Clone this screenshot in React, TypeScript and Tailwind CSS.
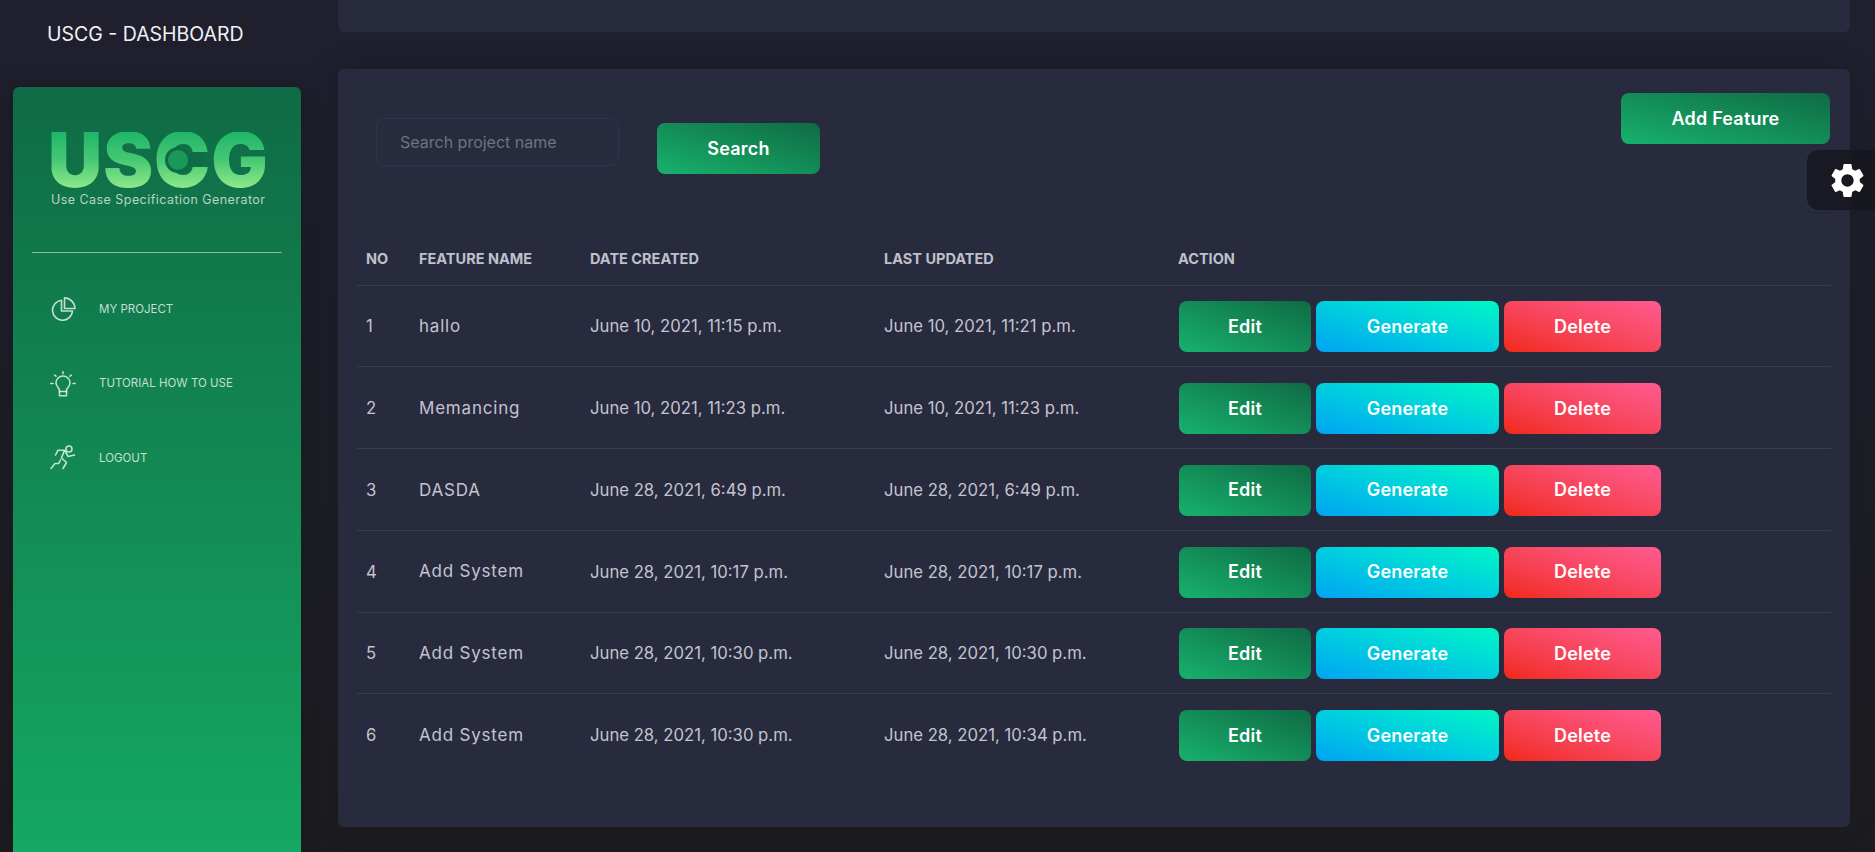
import { MdSettings } from "react-icons/md";

const rows = [
  { no: 1, name: "hallo", created: "June 10, 2021, 11:15 p.m.", updated: "June 10, 2021, 11:21 p.m." },
  { no: 2, name: "Memancing", created: "June 10, 2021, 11:23 p.m.", updated: "June 10, 2021, 11:23 p.m." },
  { no: 3, name: "DASDA", created: "June 28, 2021, 6:49 p.m.", updated: "June 28, 2021, 6:49 p.m." },
  { no: 4, name: "Add System", created: "June 28, 2021, 10:17 p.m.", updated: "June 28, 2021, 10:17 p.m." },
  { no: 5, name: "Add System", created: "June 28, 2021, 10:30 p.m.", updated: "June 28, 2021, 10:30 p.m." },
  { no: 6, name: "Add System", created: "June 28, 2021, 10:30 p.m.", updated: "June 28, 2021, 10:34 p.m." },
];

const green = "bg-linear-to-tr from-[#17b26c] to-[#0f6b45]";
const btn = "h-[51px] rounded-lg text-white text-[18px] tracking-[0.2px] font-semibold flex items-center justify-center pb-[1px]";

function PieIcon() {
  return (
    <svg width="26" height="24" viewBox="0 0 26 24" fill="none" stroke="currentColor" strokeWidth="1.6" strokeLinejoin="round">
      <path d="M11.500 3.300a10 10 0 1 0 11 10.700h-11z" />
      <path d="M14.500 .9v10.600h10.500A10.800 10.800 0 0 0 14.500 .9z" />
    </svg>
  );
}

function BulbIcon() {
  return (
    <svg width="26" height="26" viewBox="0 0 26 26" fill="none" stroke="currentColor" strokeWidth="1.6" strokeLinecap="round">
      <path d="M9.500 20.500v-1.500c0-1.800-3.500-3.500-3.500-7a7 7 0 0 1 14 0c0 3.500-3.500 5.200-3.500 7v1.500z" />
      <path d="M9.500 24.800h7M9.500 20.500v4.300M16.500 20.500v4.300" />
      <path d="M13 .8v1.800M4.500 4l1.500 1.200M21.500 4l-1.500 1.200M.8 12.500h2.200M23 12.500h2.200" />
    </svg>
  );
}

function RunnerIcon() {
  return (
    <svg width="26" height="26" viewBox="0 0 26 26" fill="none" stroke="currentColor" strokeWidth="1.6" strokeLinecap="round" strokeLinejoin="round">
      <circle cx="19" cy="4" r="3" />
      <path d="M5.500 10l2.500-4.800h6.500l-3 7.800 5 4.500-3.500 6" />
      <path d="M15 6l3 5.500 6.500-1.500" />
      <path d="M10.500 15l-1.800 3.500H5l-4 5" />
    </svg>
  );
}

function Logo() {
  return (
    <div className="relative w-[214px] h-[90px]">
      <div className="relative h-[56px]">
        <span className="block -ml-[3px] text-[75px] leading-[56px] font-black tracking-[1px] whitespace-nowrap bg-linear-to-b from-[#1db568] via-[#45c874] to-[#8ce98a] bg-clip-text text-transparent">
          USCG
        </span>
        <span className="absolute left-[127px] top-[21px] w-[25px] h-[13px] bg-[#0f6b45]" />
        <span className="absolute left-[114px] top-[15px] size-[26px] rounded-full bg-[#1a9858] border-[3px] border-[#0f6b45]" />
      </div>
      <p className="mt-[4px] text-[12.5px] leading-4 tracking-[0.45px] text-white/70 whitespace-nowrap">Use Case Specification Generator</p>
    </div>
  );
}

function Sidebar() {
  return (
    <div className="w-[338px] shrink-0 flex flex-col">
      <div className="h-[87px] pl-[47px] pt-[21px] text-[19.5px] leading-[26px] text-[#f1f1f5] whitespace-nowrap">USCG - DASHBOARD</div>
      <aside className="ml-[13px] w-[288px] h-[765px] rounded-t-md bg-linear-to-b from-[#0f6b45] to-[#15a862] shadow-[0_0_20px_rgba(0,0,0,0.2)]">
        <div className="pl-[38px] pt-[45px] h-[165px]">
          <Logo />
        </div>
        <div className="mx-[19px] h-px bg-white/50" />
        <nav className="mt-[19px] flex flex-col text-white/75">
          {[
            { label: "MY PROJECT", icon: <PieIcon /> },
            { label: "TUTORIAL HOW TO USE", icon: <BulbIcon /> },
            { label: "LOGOUT", icon: <RunnerIcon /> },
          ].map((item) => (
            <a key={item.label} className="h-[74.5px] pl-[37px] flex items-center">
              <span className="w-[49px] flex justify-start">{item.icon}</span>
              <span className="text-[11.5px]">{item.label}</span>
            </a>
          ))}
        </nav>
      </aside>
    </div>
  );
}

export default function App() {
  return (
    <div className="relative h-[852px] overflow-hidden flex bg-linear-to-b from-[#1f1f2e] to-[#1c1c20] font-['Inter','Liberation_Sans',sans-serif]">
      <Sidebar />
      <main className="w-[1512px] shrink-0 flex flex-col">
        <div className="h-[32px] rounded-b-md bg-[#282b3e]" />
        <section className="mt-[37px] h-[758px] rounded-md bg-[#282b3e] px-[19px] shadow-[0_0_30px_rgba(0,0,0,0.12)]">
          <div className="h-[144px] flex items-start justify-between border-b border-[#24263a]">
            <div className="pl-[19px] pt-[49px] flex items-start gap-[38px]">
              <div className="w-[243px] h-[48px] rounded-lg border border-[#2f3350] pl-[23px] flex items-center text-[16px] text-[#6f7284]">
                Search project name
              </div>
              <button className={`${btn} ${green} w-[163px] mt-[5px]`}>Search</button>
            </div>
            <button className={`${btn} ${green} w-[209px] mt-[24px] mr-[1px]`}>Add Feature</button>
          </div>
          <table className="w-full table-fixed border-collapse">
            <colgroup>
              <col className="w-[53px]" />
              <col className="w-[171px]" />
              <col className="w-[294px]" />
              <col className="w-[294px]" />
              <col />
            </colgroup>
            <thead>
              <tr className="h-[72px] text-left text-[14.5px] font-black text-[#bfc0cc] border-b border-[#3a3c50]">
                <th className="pl-[9px] pt-[21px]">NO</th>
                <th className="pl-[9px] pt-[21px]">FEATURE NAME</th>
                <th className="pl-[9px] pt-[21px]">DATE CREATED</th>
                <th className="pl-[9px] pt-[21px]">LAST UPDATED</th>
                <th className="pl-[9px] pt-[21px]">ACTION</th>
              </tr>
            </thead>
            <tbody>
              {rows.map((row) => (
                <tr key={row.no} className="h-[81.75px] text-[16.7px] text-[#c3c4ce] border-b border-[#3a3c50] last:border-b-0">
                  <td className="pl-[9px] pt-[2px]">{row.no}</td>
                  <td className="pl-[9px] pt-[2px] text-[17px] tracking-[0.8px]">{row.name}</td>
                  <td className="pl-[9px] pt-[2px] whitespace-nowrap">{row.created}</td>
                  <td className="pl-[9px] pt-[2px] whitespace-nowrap">{row.updated}</td>
                  <td className="pl-[10px] pt-[2px]">
                    <div className="flex gap-[5px]">
                      <button className={`${btn} ${green} w-[132px]`}>Edit</button>
                      <button className={`${btn} w-[183px] bg-linear-to-tr from-[#00a3f2] to-[#00f7c4]`}>Generate</button>
                      <button className={`${btn} w-[157px] bg-linear-to-tr from-[#f12711] to-[#ff5a90]`}>Delete</button>
                    </div>
                  </td>
                </tr>
              ))}
            </tbody>
          </table>
        </section>
      </main>
      <div className="absolute right-0 top-[150px] w-[68px] h-[60px] rounded-l-xl bg-[#16161f]/85 flex items-center pl-[22px] text-white">
        <MdSettings size={41} className="shrink-0 -ml-[2px]" />
      </div>
    </div>
  );
}
